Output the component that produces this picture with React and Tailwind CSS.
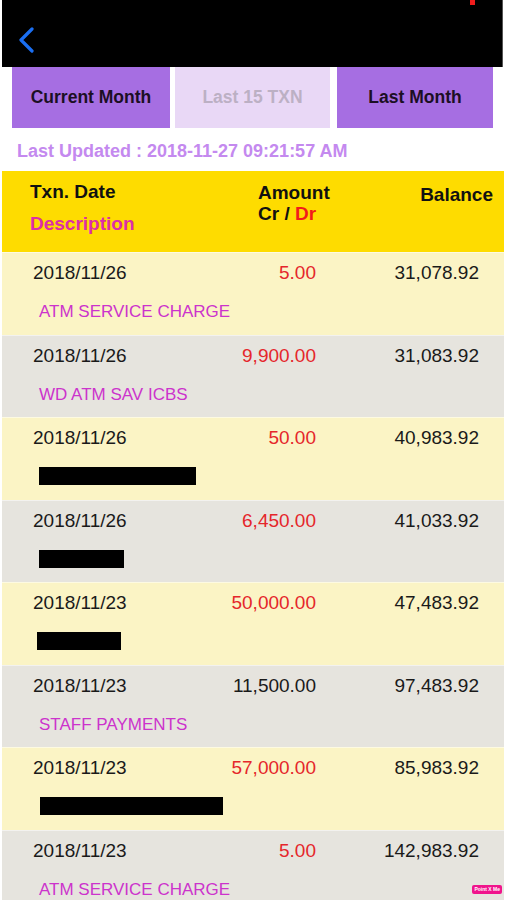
import React from "react";

const rows = [
  { date: "2018/11/26", amount: "5.00", dr: true, balance: "31,078.92", desc: "ATM SERVICE CHARGE" },
  { date: "2018/11/26", amount: "9,900.00", dr: true, balance: "31,083.92", desc: "WD ATM SAV ICBS" },
  { date: "2018/11/26", amount: "50.00", dr: true, balance: "40,983.92", bar: "w-[157px] ml-[37px]" },
  { date: "2018/11/26", amount: "6,450.00", dr: true, balance: "41,033.92", bar: "w-[85px] ml-[37px]" },
  { date: "2018/11/23", amount: "50,000.00", dr: true, balance: "47,483.92", bar: "w-[84px] ml-[35px]" },
  { date: "2018/11/23", amount: "11,500.00", dr: false, balance: "97,483.92", desc: "STAFF PAYMENTS" },
  { date: "2018/11/23", amount: "57,000.00", dr: true, balance: "85,983.92", bar: "w-[183px] ml-[38px]" },
  { date: "2018/11/23", amount: "5.00", dr: true, balance: "142,983.92", desc: "ATM SERVICE CHARGE" },
];

function TxnRow({ row, index }) {
  const bg = index % 2 === 0 ? "bg-[#fbf4c5]" : "bg-[#e6e4de]";
  return (
    <div className={`${bg} h-[82.5px] shrink-0 border-t border-white/50 overflow-hidden`}>
      <div className="flex pt-[8px] pl-[31px] pr-[25px] text-[19px] leading-[24px] text-[#1a1a1a]">
        <span className="w-[150px]">{row.date}</span>
        <span className={`w-[133px] text-right ${row.dr ? "text-[#e5262b]" : "text-[#1a1a1a]"}`}>
          {row.amount}
        </span>
        <span className="flex-1 text-right">{row.balance}</span>
      </div>
      {row.desc ? (
        <div className="mt-[16px] pl-[37px] text-[17px] leading-[22px] text-[#cc33cc]">{row.desc}</div>
      ) : (
        <div className={`mt-[17px] h-[18px] bg-black ${row.bar}`} />
      )}
    </div>
  );
}

export default function App() {
  return (
    <div className="relative w-[507px] h-[900px] overflow-hidden bg-white font-['Liberation_Sans',Arial,sans-serif]">
      {/* top bar */}
      <div className="relative mx-[2px] w-[501px] h-[67px] bg-black border-r border-[#555]">
        <svg
          className="absolute left-[15px] top-[27px]"
          width="20"
          height="26"
          viewBox="0 0 20 26"
          fill="none"
        >
          <path d="M15 2 L4 13 L15 24" stroke="#1b6ff2" strokeWidth="3.2" strokeLinecap="round" strokeLinejoin="round" />
        </svg>
        <div className="absolute left-[468px] top-0 w-[5px] h-[5px] bg-[#f01c1c]" />
      </div>

      {/* filter buttons */}
      <div className="flex pl-[12px]">
        <button className="w-[158px] h-[61px] bg-[#a66ee2] text-[17.5px] font-bold text-[#1c0f24]">
          Current Month
        </button>
        <button className="ml-[5px] w-[155px] h-[61px] bg-[#e9d8f6] text-[17.5px] font-bold text-[#bcb0c4]">
          Last 15 TXN
        </button>
        <button className="ml-[7px] w-[156px] h-[61px] bg-[#a66ee2] text-[17.5px] font-bold text-[#1c0f24]">
          Last Month
        </button>
      </div>

      <div className="mt-[12px] mb-[9px] pl-[17px] text-[18px] leading-[22px] font-bold text-[#c489ef]">
        Last Updated : 2018-11-27 09:21:57 AM
      </div>

      {/* table header */}
      <div className="mx-[2px] w-[502px] h-[81px] bg-[#fedc00] flex font-bold text-[19px] text-[#111]">
        <div className="w-[256px] pl-[28px] pt-[9px]">
          <div className="leading-[24px]">Txn. Date</div>
          <div className="mt-[8px] leading-[24px] text-[#dc2fa8]">Description</div>
        </div>
        <div className="pt-[11px]">
          <div className="leading-[22px]">Amount</div>
          <div className="leading-[20px]">
            Cr / <span className="text-[#f21b1b]">Dr</span>
          </div>
        </div>
        <div className="flex-1 text-right pr-[11px] pt-[12px] leading-[24px]">Balance</div>
      </div>

      {/* rows */}
      <div className="mx-[2px] w-[502px] flex flex-col">
        {rows.map((row, i) => (
          <TxnRow key={i} row={row} index={i} />
        ))}
      </div>

      <div className="absolute right-[5px] top-[885px] px-[2px] h-[9px] rounded-[2px] bg-[#f0148c] text-[5px] leading-[9px] font-bold text-white">
        Point X Me
      </div>
    </div>
  );
}
